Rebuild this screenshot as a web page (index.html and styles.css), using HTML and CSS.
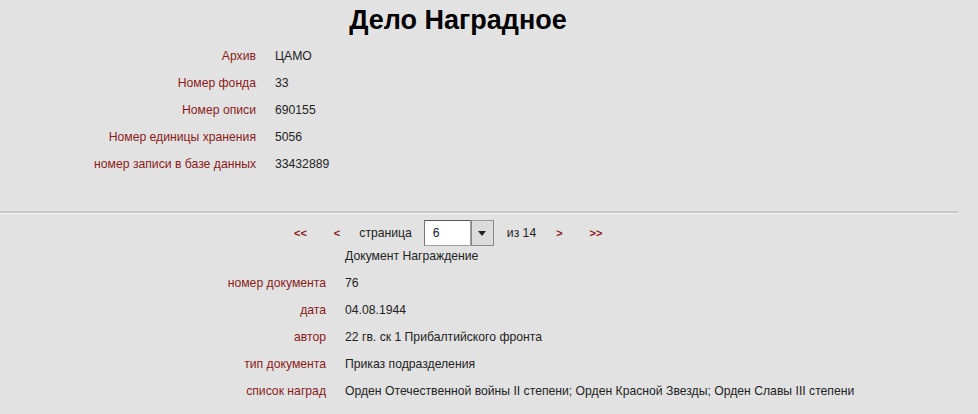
FILE: index.html
```html
<!DOCTYPE html>
<html lang="ru">
<head>
<meta charset="utf-8">
<link rel="stylesheet" href="styles.css">
</head>
<body>
<div class="page">
  <h1 class="title">Дело Наградное</h1>
  <div class="info info-top">
    <div class="lbl">Архив</div><div class="val">ЦАМО</div>
    <div class="lbl">Номер фонда</div><div class="val">33</div>
    <div class="lbl">Номер описи</div><div class="val">690155</div>
    <div class="lbl">Номер единицы хранения</div><div class="val">5056</div>
    <div class="lbl">номер записи в базе данных</div><div class="val">33432889</div>
  </div>
  <hr class="sep">
  <div class="pager">
    <a class="nav first">&lt;&lt;</a>
    <a class="nav prev">&lt;</a>
    <span class="word">страница</span>
    <span class="select"><span class="sel-val">6</span><span class="sel-btn"><svg width="8" height="5" viewBox="0 0 8 5"><path d="M0 0H8L4 5Z" fill="#222"/></svg></span></span>
    <span class="word of">из 14</span>
    <a class="nav next">&gt;</a>
    <a class="nav last">&gt;&gt;</a>
  </div>
  <div class="doc-title">Документ Награждение</div>
  <div class="info info-bottom">
    <div class="lbl">номер документа</div><div class="val">76</div>
    <div class="lbl">дата</div><div class="val">04.08.1944</div>
    <div class="lbl">автор</div><div class="val">22 гв. ск 1 Прибалтийского фронта</div>
    <div class="lbl">тип документа</div><div class="val">Приказ подразделения</div>
    <div class="lbl">список наград</div><div class="val">Орден Отечественной войны II степени; Орден Красной Звезды; Орден Славы III степени</div>
  </div>
</div>
</body>
</html>
```
FILE: styles.css
```css
html, body {
  margin: 0;
  padding: 0;
  background: #e2e2e2;
}
body {
  font-family: "Liberation Sans", Arial, sans-serif;
  font-size: 12.2px;
  color: #222;
}
.page {
  width: 978px;
}
.title {
  margin: 0;
  width: 916px;
  text-align: center;
  font-size: 27px;
  font-weight: bold;
  color: #000;
  line-height: 30px;
  padding-top: 5px;
}
.info {
  display: grid;
  row-gap: 13px;
  line-height: 14px;
}
.info-top {
  grid-template-columns: 256px auto;
  column-gap: 19px;
  margin-top: 14px;
}
.info-bottom {
  grid-template-columns: 326px auto;
  column-gap: 19px;
  margin-top: 13px;
}
.lbl {
  text-align: right;
  color: #8b1a1a;
}
.val {
  color: #222;
}
.sep {
  margin: 40px 0 0 0;
  width: 958px;
  height: 0;
  border: 0;
  border-top: 2px solid #c8c8c8;
  border-bottom: 1px solid #f2f2f2;
}
.pager {
  display: flex;
  align-items: center;
  padding-left: 294px;
  margin-top: 6px;
  height: 26px;
}
.nav {
  color: #8b1a1a;
  font-weight: bold;
  font-size: 11px;
}
.first { margin-right: 27px; }
.prev { margin-right: 19px; }
.word { margin-right: 12px; }
.of { margin-left: 1px; margin-right: 20px; }
.next { margin-right: 27px; }
.select {
  display: flex;
  height: 26px;
  margin-right: 12px;
  box-sizing: border-box;
}
.sel-val {
  width: 47px;
  box-sizing: border-box;
  background: #fff;
  border: 1px solid #a0a0a0;
  border-top-color: #555;
  border-left-color: #777;
  padding-left: 8px;
  line-height: 24px;
  color: #123;
}
.sel-btn {
  width: 23px;
  box-sizing: border-box;
  background: #dcdcdc;
  border: 1px solid #888;
  border-top-color: #999;
  display: flex;
  align-items: center;
  justify-content: center;
}
.doc-title {
  margin-top: 3px;
  padding-left: 345px;
  line-height: 14px;
}
```
